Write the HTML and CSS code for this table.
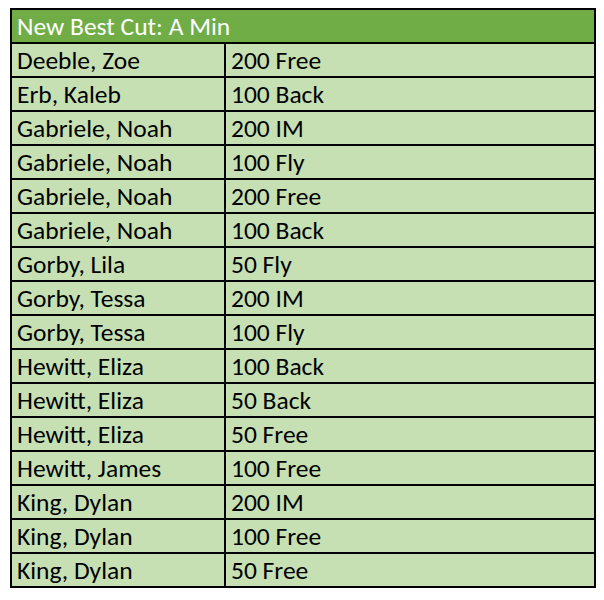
FILE: index.html
```html
<!DOCTYPE html>
<html lang="en">
<head>
<meta charset="utf-8">
<title>New Best Cut: A Min</title>
<link rel="stylesheet" href="styles.css">
</head>
<body>
<table class="cuts">
  <colgroup>
    <col class="col-name">
    <col class="col-event">
  </colgroup>
  <thead>
    <tr><th class="title" colspan="2">New Best Cut: A Min</th></tr>
  </thead>
  <tbody>
    <tr><td class="name">Deeble, Zoe</td><td class="event">200 Free</td></tr>
    <tr><td class="name">Erb, Kaleb</td><td class="event">100 Back</td></tr>
    <tr><td class="name">Gabriele, Noah</td><td class="event">200 IM</td></tr>
    <tr><td class="name">Gabriele, Noah</td><td class="event">100 Fly</td></tr>
    <tr><td class="name">Gabriele, Noah</td><td class="event">200 Free</td></tr>
    <tr><td class="name">Gabriele, Noah</td><td class="event">100 Back</td></tr>
    <tr><td class="name">Gorby, Lila</td><td class="event">50 Fly</td></tr>
    <tr><td class="name">Gorby, Tessa</td><td class="event">200 IM</td></tr>
    <tr><td class="name">Gorby, Tessa</td><td class="event">100 Fly</td></tr>
    <tr><td class="name">Hewitt, Eliza</td><td class="event">100 Back</td></tr>
    <tr><td class="name">Hewitt, Eliza</td><td class="event">50 Back</td></tr>
    <tr><td class="name">Hewitt, Eliza</td><td class="event">50 Free</td></tr>
    <tr><td class="name">Hewitt, James</td><td class="event">100 Free</td></tr>
    <tr><td class="name">King, Dylan</td><td class="event">200 IM</td></tr>
    <tr><td class="name">King, Dylan</td><td class="event">100 Free</td></tr>
    <tr><td class="name">King, Dylan</td><td class="event">50 Free</td></tr>
  </tbody>
</table>
</body>
</html>
```
FILE: styles.css
```css
html, body {
  margin: 0;
  padding: 0;
  background: #ffffff;
}

body {
  padding: 8px 0 0 10px;
  font-family: Calibri, Carlito, Lato, "Liberation Sans", sans-serif;
}

.cuts {
  border-collapse: separate;
  border-spacing: 0;
  width: 586px;
  table-layout: fixed;
  border-top: 2px solid #000;
  border-left: 2px solid #000;
  font-size: 25.5px;
}

.col-name {
  width: 214px;
}

.cuts th,
.cuts td {
  box-sizing: border-box;
  height: 34px;
  padding: 2px 4px 0 5px;
  border-right: 2px solid #000;
  border-bottom: 2px solid #000;
  text-align: left;
  vertical-align: top;
  white-space: nowrap;
  overflow: hidden;
  line-height: 30px;
}

.title {
  background: #70ad47;
  color: #ffffff;
  font-weight: normal;
}

.name,
.event {
  background: #c6e0b4;
  color: #000000;
}
```
